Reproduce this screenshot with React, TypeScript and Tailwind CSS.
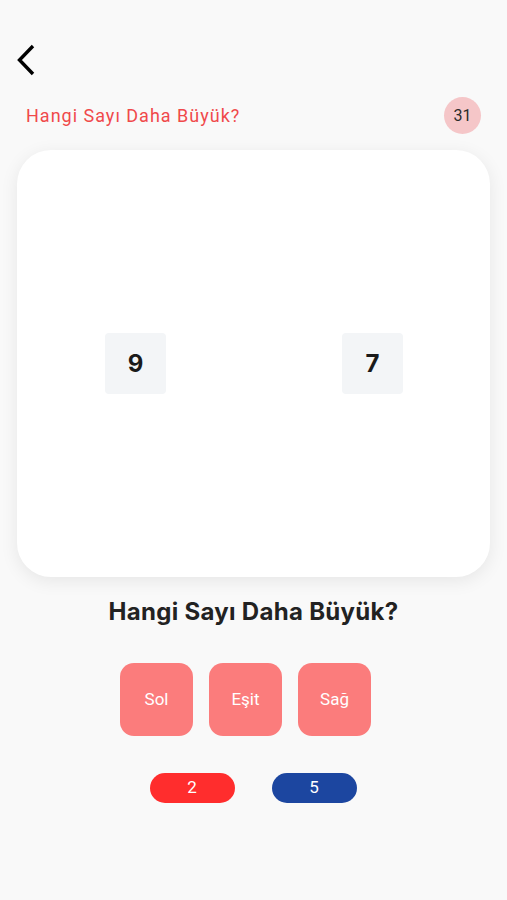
import React from "react";

export default function App() {
  return (
    <div className="w-[507px] h-[900px] bg-[#f9f9f9] flex flex-col" style={{ fontFamily: "Roboto, 'Noto Sans', sans-serif" }}>
      <div className="h-[40px]" />
      <div className="pl-[14px] h-[40px] flex items-center">
        <svg width="26" height="34" viewBox="0 0 26 34" fill="none" stroke="#000" strokeWidth="3.4" strokeLinecap="butt" strokeLinejoin="miter">
          <path d="M19 3 L5.5 17 L19 31" />
        </svg>
      </div>
      <div className="mt-[17px] px-[26px] flex items-center justify-between h-[37px]">
        <span className="text-[18px] text-[#f0494b] tracking-[1px]">Hangi Sayı Daha Büyük?</span>
        <div className="w-[37px] h-[37px] rounded-full bg-[#f5c6c8] flex items-center justify-center text-[16px] text-[#2b2b2b]">31</div>
      </div>
      <div className="mx-[17px] mt-[16px] h-[427px] rounded-[34px] bg-white shadow-[0_4px_18px_rgba(0,0,0,0.08)] flex items-center justify-between pl-[88px] pr-[87px]">
        <div className="w-[61px] h-[61px] rounded-[4px] bg-[#f3f5f7] flex items-center justify-center text-[24px] font-bold text-[#1a1a1a]" style={{ fontFamily: "Inter, sans-serif" }}>9</div>
        <div className="w-[61px] h-[61px] rounded-[4px] bg-[#f3f5f7] flex items-center justify-center text-[24px] font-bold text-[#1a1a1a]" style={{ fontFamily: "Inter, sans-serif" }}>7</div>
      </div>
      <div className="mt-[17px] text-center text-[24px] font-bold text-[#222] tracking-[0.3px]" style={{ fontFamily: "Inter, sans-serif" }}>Hangi Sayı Daha Büyük?</div>
      <div className="mt-[33px] flex justify-center gap-[16px] pr-[16px]">
        {["Sol", "Eşit", "Sağ"].map((t) => (
          <div key={t} className="w-[73px] h-[73px] rounded-[14px] bg-[#fb7c7c] flex items-center justify-center text-white text-[17px]">{t}</div>
        ))}
      </div>
      <div className="mt-[37px] flex justify-center gap-[37px] pr-[1px]">
        <div className="w-[85px] h-[30px] rounded-full bg-[#ff2d2d] flex items-center justify-center text-white text-[17px]">2</div>
        <div className="w-[85px] h-[30px] rounded-full bg-[#1c46a0] flex items-center justify-center text-white text-[17px]">5</div>
      </div>
    </div>
  );
}
